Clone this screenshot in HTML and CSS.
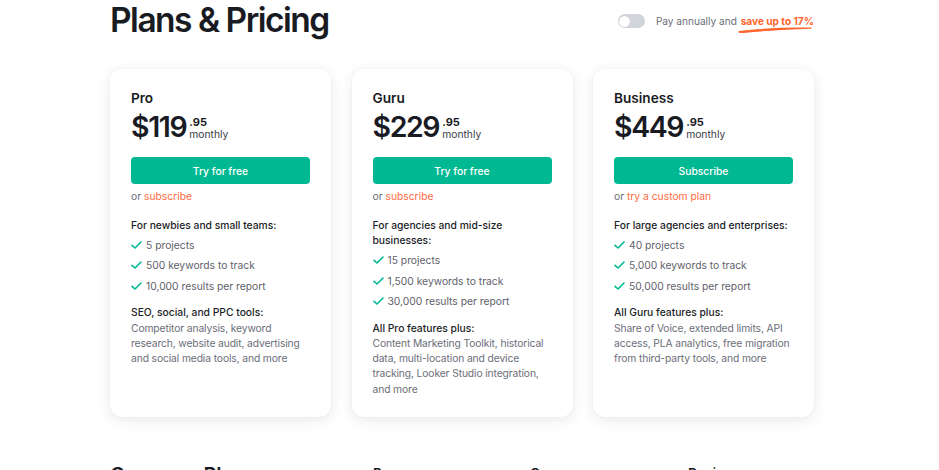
FILE: index.html
```html
<!DOCTYPE html>
<html lang="en">
<head>
<meta charset="utf-8">
<title>Plans &amp; Pricing</title>
<link rel="stylesheet" href="styles.css">
</head>
<body>
<div class="page">
  <header class="top">
    <h1 class="title">Plans &amp; Pricing</h1>
    <div class="annual">
      <span class="toggle"><span class="knob"></span></span>
      <span class="annual-text">Pay annually and <span class="save">save up to 17%<svg class="swoosh" viewBox="0 0 74 6" width="74" height="6" aria-hidden="true"><path d="M1 4.6 C 20 2.2, 45 0.8, 73 1.2 C 47 1.9, 22 3.6, 2 5.8 Z" fill="#ff642d" stroke="#ff642d" stroke-width="1.2" stroke-linejoin="round"/></svg></span></span>
    </div>
  </header>

  <div class="cards">
    <article class="card">
      <h2 class="plan">Pro</h2>
      <div class="price"><span class="amount">$119</span><span class="cents-block"><span class="cents">.95</span><span class="period">monthly</span></span></div>
      <a class="btn">Try for free</a>
      <p class="alt">or <span class="link">subscribe</span></p>
      <p class="sub">For newbies and small teams:</p>
      <ul class="list">
        <li><svg class="check" viewBox="0 0 11 8" width="11" height="8"><path d="M1 4.3 L4 7 L10 1" fill="none" stroke="#00b992" stroke-width="1.6" stroke-linecap="round" stroke-linejoin="round"/></svg>5 projects</li>
        <li><svg class="check" viewBox="0 0 11 8" width="11" height="8"><path d="M1 4.3 L4 7 L10 1" fill="none" stroke="#00b992" stroke-width="1.6" stroke-linecap="round" stroke-linejoin="round"/></svg>500 keywords to track</li>
        <li><svg class="check" viewBox="0 0 11 8" width="11" height="8"><path d="M1 4.3 L4 7 L10 1" fill="none" stroke="#00b992" stroke-width="1.6" stroke-linecap="round" stroke-linejoin="round"/></svg>10,000 results per report</li>
      </ul>
      <p class="sub feat">SEO, social, and PPC tools:</p>
      <p class="desc">Competitor analysis, keyword research, website audit, advertising and social media tools, and more</p>
    </article>

    <article class="card">
      <h2 class="plan">Guru</h2>
      <div class="price"><span class="amount">$229</span><span class="cents-block"><span class="cents">.95</span><span class="period">monthly</span></span></div>
      <a class="btn">Try for free</a>
      <p class="alt">or <span class="link">subscribe</span></p>
      <p class="sub">For agencies and mid-size businesses:</p>
      <ul class="list">
        <li><svg class="check" viewBox="0 0 11 8" width="11" height="8"><path d="M1 4.3 L4 7 L10 1" fill="none" stroke="#00b992" stroke-width="1.6" stroke-linecap="round" stroke-linejoin="round"/></svg>15 projects</li>
        <li><svg class="check" viewBox="0 0 11 8" width="11" height="8"><path d="M1 4.3 L4 7 L10 1" fill="none" stroke="#00b992" stroke-width="1.6" stroke-linecap="round" stroke-linejoin="round"/></svg>1,500 keywords to track</li>
        <li><svg class="check" viewBox="0 0 11 8" width="11" height="8"><path d="M1 4.3 L4 7 L10 1" fill="none" stroke="#00b992" stroke-width="1.6" stroke-linecap="round" stroke-linejoin="round"/></svg>30,000 results per report</li>
      </ul>
      <p class="sub feat">All Pro features plus:</p>
      <p class="desc">Content Marketing Toolkit, historical data, multi-location and device tracking, Looker Studio integration, and more</p>
    </article>

    <article class="card">
      <h2 class="plan">Business</h2>
      <div class="price"><span class="amount">$449</span><span class="cents-block"><span class="cents">.95</span><span class="period">monthly</span></span></div>
      <a class="btn">Subscribe</a>
      <p class="alt">or <span class="link">try a custom plan</span></p>
      <p class="sub">For large agencies and enterprises:</p>
      <ul class="list">
        <li><svg class="check" viewBox="0 0 11 8" width="11" height="8"><path d="M1 4.3 L4 7 L10 1" fill="none" stroke="#00b992" stroke-width="1.6" stroke-linecap="round" stroke-linejoin="round"/></svg>40 projects</li>
        <li><svg class="check" viewBox="0 0 11 8" width="11" height="8"><path d="M1 4.3 L4 7 L10 1" fill="none" stroke="#00b992" stroke-width="1.6" stroke-linecap="round" stroke-linejoin="round"/></svg>5,000 keywords to track</li>
        <li><svg class="check" viewBox="0 0 11 8" width="11" height="8"><path d="M1 4.3 L4 7 L10 1" fill="none" stroke="#00b992" stroke-width="1.6" stroke-linecap="round" stroke-linejoin="round"/></svg>50,000 results per report</li>
      </ul>
      <p class="sub feat">All Guru features plus:</p>
      <p class="desc">Share of Voice, extended limits, API access, PLA analytics, free migration from third-party tools, and more</p>
    </article>
  </div>

  <section class="compare">
    <h2 class="compare-title">Compare Plans</h2>
    <span class="col-label">Pro</span>
    <span class="col-label">Guru</span>
    <span class="col-label">Business</span>
  </section>
</div>
</body>
</html>
```

FILE: styles.css
```css
html, body {
  margin: 0;
  padding: 0;
  background: #ffffff;
  overflow: hidden;
}

body {
  font-family: Inter, "Noto Sans", "Liberation Sans", sans-serif;
  color: #1c1e27;
}

.page {
  width: 704px;
  margin-left: 110px;
}

.top {
  display: flex;
  justify-content: space-between;
  align-items: center;
  height: 40px;
}

.title {
  margin: 0;
  font-size: 33.5px;
  line-height: 40px;
  font-weight: 600;
  letter-spacing: -1.5px;
  color: #191b23;
}

.annual {
  display: flex;
  align-items: center;
  gap: 11px;
  margin-top: 2px;
}

.toggle {
  display: flex;
  align-items: center;
  width: 27px;
  height: 14px;
  border-radius: 7px;
  background: #d1d4db;
  padding: 0 1.5px;
  box-sizing: border-box;
}

.knob {
  width: 11px;
  height: 11px;
  border-radius: 50%;
  background: #ffffff;
  box-shadow: 0 0 1px rgba(0, 0, 0, 0.15);
}

.annual-text {
  font-size: 10.1px;
  line-height: 14px;
  color: #6c6e79;
}

.save {
  position: relative;
  font-weight: 700;
  color: #ff642d;
  margin-left: 1px;
}

.swoosh {
  position: absolute;
  left: -3px;
  top: 12px;
}

.cards {
  display: grid;
  grid-template-columns: repeat(3, 1fr);
  column-gap: 20.5px;
  margin-top: 29px;
}

.card {
  background: #ffffff;
  border-radius: 12px;
  box-shadow: 0 3px 14px rgba(30, 35, 60, 0.10), 0 0 2px rgba(30, 35, 60, 0.06);
  padding: 18.5px 21px 19.5px 21px;
}

.plan {
  margin: 0;
  font-size: 13.6px;
  line-height: 20px;
  font-weight: 600;
  color: #191b23;
}

.price {
  display: flex;
  align-items: flex-start;
  margin-top: 2.5px;
}

.amount {
  font-size: 28.5px;
  line-height: 34px;
  font-weight: 600;
  letter-spacing: -1.4px;
  color: #191b23;
}

.cents-block {
  display: flex;
  flex-direction: column;
  padding-top: 5.7px;
  margin-left: 3px;
}

.cents {
  font-size: 11px;
  line-height: 12px;
  font-weight: 700;
  color: #191b23;
}

.period {
  font-size: 10.3px;
  line-height: 12px;
  color: #393b47;
}

.btn {
  display: flex;
  align-items: center;
  justify-content: center;
  height: 27px;
  margin-top: 13px;
  border-radius: 4px;
  background: #00b992;
  color: #ffffff;
  font-size: 10.3px;
  font-weight: 500;
}

.alt {
  margin: 5px 0 0 0;
  font-size: 10.3px;
  line-height: 15.5px;
  color: #6c6e79;
}

.link {
  color: #ff6b43;
}

.sub {
  margin: 13.2px 0 0 0;
  font-size: 10.3px;
  line-height: 15.3px;
  font-weight: 500;
  color: #1c1e27;
}

.sub.feat {
  margin-top: 9.3px;
}

.list {
  list-style: none;
  margin: 1.5px 0 0 0;
  padding: 0;
}

.list li {
  display: flex;
  align-items: center;
  gap: 4px;
  height: 20.5px;
  font-size: 10.3px;
  color: #5f616c;
}

.check {
  flex: none;
}

.desc {
  margin: 0;
  font-size: 10.3px;
  line-height: 15.3px;
  letter-spacing: -0.12px;
  color: #6c6e79;
}

.compare {
  display: grid;
  grid-template-columns: 263px 157px 158px 1fr;
  align-items: start;
  margin-top: 46px;
}

.compare-title {
  margin: 0;
  font-size: 20px;
  line-height: 24px;
  font-weight: 600;
  color: #191b23;
}

.col-label {
  font-size: 13.5px;
  line-height: 20px;
  font-weight: 600;
  color: #191b23;
}
```
